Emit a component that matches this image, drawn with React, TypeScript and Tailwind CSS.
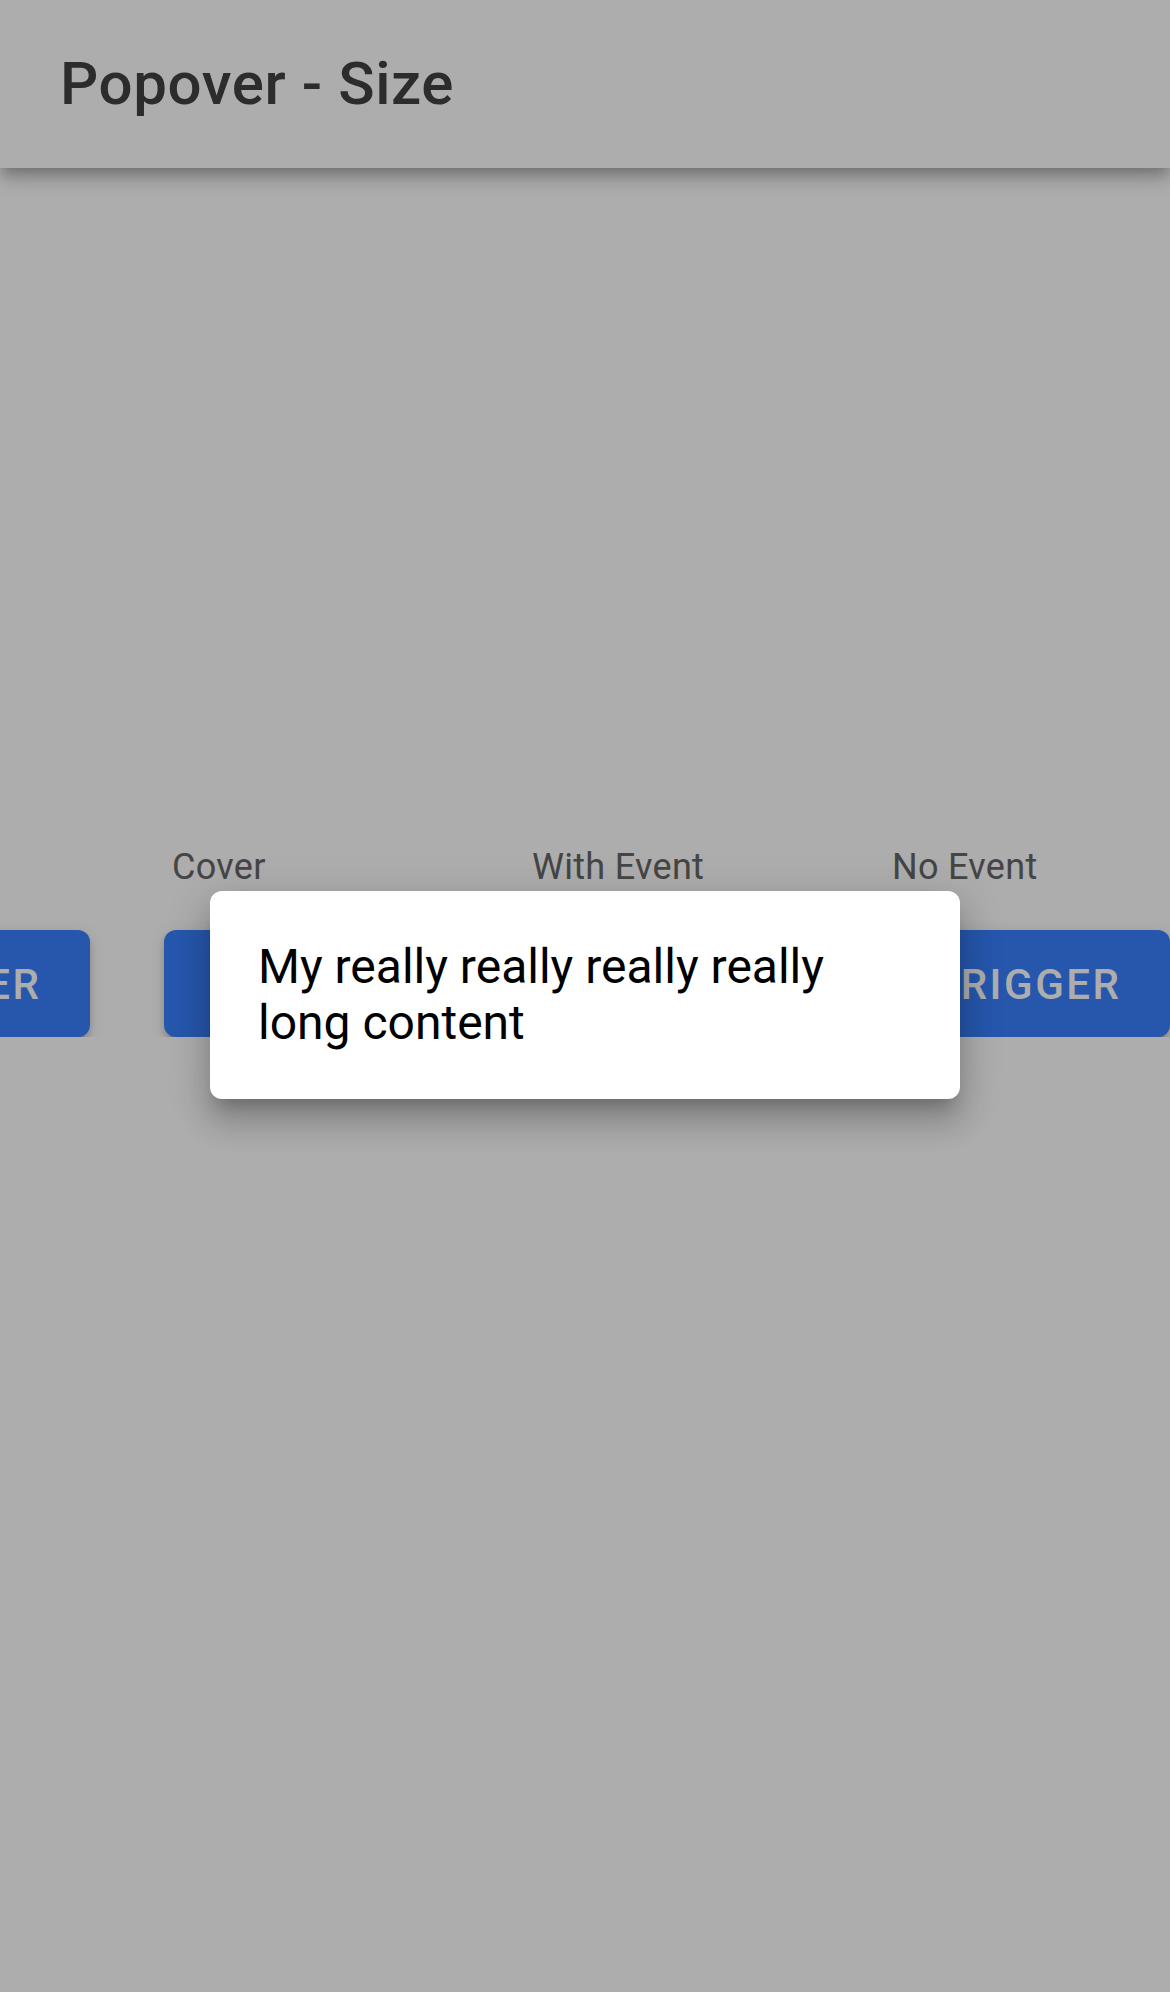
import React from "react";

const columns = ["Auto", "Cover", "With Event", "No Event"];

const App = () => {
  return (
    <div className="relative h-[1992px] w-[1170px] overflow-hidden bg-white font-['Roboto',sans-serif]">
      <header className="relative z-10 flex h-[168px] items-center bg-white px-[60px] shadow-[0_6px_12px_-3px_rgba(0,0,0,0.2),0_12px_15px_0_rgba(0,0,0,0.14),0_3px_30px_0_rgba(0,0,0,0.12)]">
        <h1 className="text-[60px] font-medium leading-none tracking-[0.6px] text-[#424242]">Popover - Size</h1>
      </header>

      <main className="overflow-hidden pt-[678px]">
        <div className="-ml-[196px] flex gap-[74px]">
          {columns.map((label) => (
            <div key={label} className="flex w-[286px] shrink-0 flex-col gap-[42px]">
              <span className="pl-[8px] text-[36px] leading-[42px] tracking-[0.3px] text-[#666666]">{label}</span>
              <button className="h-[107px] w-full rounded-[12px] bg-[#3880ff] pt-[2px] text-[42px] font-medium tracking-[0.06em] text-white shadow-[0_9px_3px_-6px_rgba(0,0,0,0.2),0_6px_6px_0_rgba(0,0,0,0.14),0_3px_15px_0_rgba(0,0,0,0.12)]">
                TRIGGER
              </button>
            </div>
          ))}
        </div>
      </main>

      {/* backdrop */}
      <div className="absolute inset-0 z-20 bg-black/[0.32]" />

      {/* popover */}
      <div className="absolute left-[210px] top-[891px] z-30 w-[750px] rounded-[12px] bg-white p-[48px] shadow-[0_15px_15px_-9px_rgba(0,0,0,0.2),0_24px_30px_3px_rgba(0,0,0,0.14),0_9px_42px_6px_rgba(0,0,0,0.12)]">
        <p className="text-[48px] leading-[56px] text-black">My really really really really long content</p>
      </div>
    </div>
  );
};

export default App;
